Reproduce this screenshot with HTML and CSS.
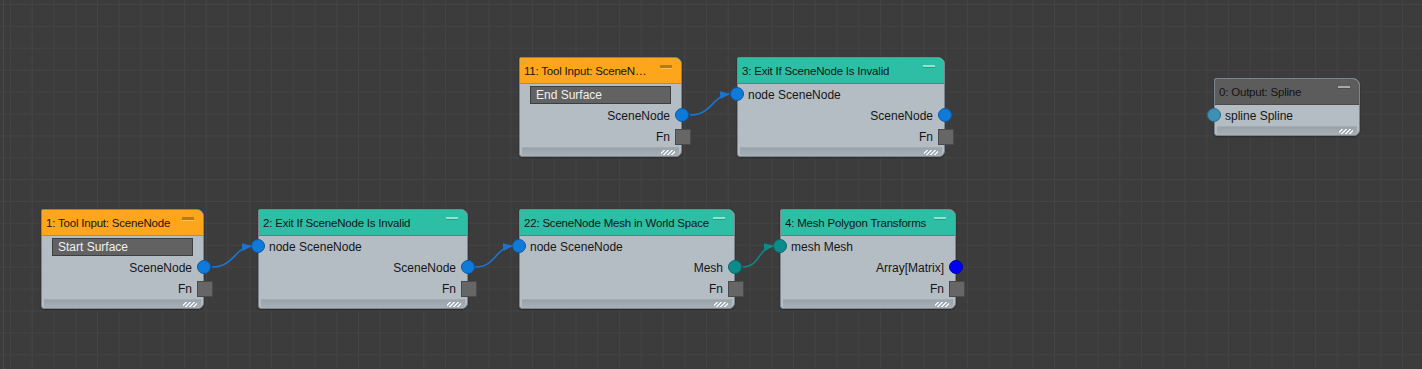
FILE: index.html
```html
<!DOCTYPE html>
<html>
<head>
<meta charset="utf-8">
<link rel="stylesheet" href="styles.css">
</head>
<body>
<div class="canvas">
  <svg class="wires" width="1422" height="369" viewBox="0 0 1422 369">
    <defs>
      <marker id="ab" markerWidth="10" markerHeight="8" refX="9" refY="4" orient="auto" markerUnits="userSpaceOnUse">
        <path d="M0,0 L10,4 L0,8 Z" fill="#1a74d0"/>
      </marker>
      <marker id="at" markerWidth="10" markerHeight="8" refX="9" refY="4" orient="auto" markerUnits="userSpaceOnUse">
        <path d="M0,0 L10,4 L0,8 Z" fill="#0e8a8a"/>
      </marker>
    </defs>
    <path class="wire blue" d="M690,115 C712,115 712,96 729,94" marker-end="url(#ab)"/>
    <path class="wire blue" d="M212,267 C234,267 234,248 251,246" marker-end="url(#ab)"/>
    <path class="wire blue" d="M475,267 C496,267 495,248 512,246" marker-end="url(#ab)"/>
    <path class="wire teal" d="M743,267 C760,267 758,248 773,246" marker-end="url(#at)"/>
  </svg>

  <div class="node orange" style="left:519px;top:57px;width:163px">
    <div class="head"><span class="title clip">11: Tool Input: SceneNode</span><span class="collapse"></span></div>
    <div class="row"><div class="field">End Surface</div></div>
    <div class="row out"><span>SceneNode</span><i class="port blue"></i></div>
    <div class="row out"><span>Fn</span><i class="sq"></i></div>
    <div class="foot"><i class="grip"></i></div>
  </div>

  <div class="node teal" style="left:737px;top:57px;width:208px">
    <div class="head"><span class="title">3: Exit If SceneNode Is Invalid</span><span class="collapse"></span></div>
    <div class="row in"><i class="port blue"></i><span>node SceneNode</span></div>
    <div class="row out"><span>SceneNode</span><i class="port blue"></i></div>
    <div class="row out"><span>Fn</span><i class="sq"></i></div>
    <div class="foot"><i class="grip"></i></div>
  </div>

  <div class="node grey" style="left:1214px;top:78px;width:146px">
    <div class="head"><span class="title">0: Output: Spline</span><span class="collapse"></span></div>
    <div class="row in"><i class="port steel"></i><span>spline Spline</span></div>
    <div class="foot"><i class="grip"></i></div>
  </div>

  <div class="node orange" style="left:41px;top:209px;width:163px">
    <div class="head"><span class="title">1: Tool Input: SceneNode</span><span class="collapse"></span></div>
    <div class="row"><div class="field">Start Surface</div></div>
    <div class="row out"><span>SceneNode</span><i class="port blue"></i></div>
    <div class="row out"><span>Fn</span><i class="sq"></i></div>
    <div class="foot"><i class="grip"></i></div>
  </div>

  <div class="node teal" style="left:258px;top:209px;width:210px">
    <div class="head"><span class="title">2: Exit If SceneNode Is Invalid</span><span class="collapse"></span></div>
    <div class="row in"><i class="port blue"></i><span>node SceneNode</span></div>
    <div class="row out"><span>SceneNode</span><i class="port blue"></i></div>
    <div class="row out"><span>Fn</span><i class="sq"></i></div>
    <div class="foot"><i class="grip"></i></div>
  </div>

  <div class="node teal" style="left:519px;top:209px;width:216px">
    <div class="head"><span class="title">22: SceneNode Mesh in World Space</span><span class="collapse"></span></div>
    <div class="row in"><i class="port blue"></i><span>node SceneNode</span></div>
    <div class="row out"><span>Mesh</span><i class="port tealp"></i></div>
    <div class="row out"><span>Fn</span><i class="sq"></i></div>
    <div class="foot"><i class="grip"></i></div>
  </div>

  <div class="node teal" style="left:780px;top:209px;width:176px">
    <div class="head"><span class="title">4: Mesh Polygon Transforms</span><span class="collapse"></span></div>
    <div class="row in"><i class="port tealp"></i><span>mesh Mesh</span></div>
    <div class="row out"><span>Array[Matrix]</span><i class="port pure"></i></div>
    <div class="row out"><span>Fn</span><i class="sq"></i></div>
    <div class="foot"><i class="grip"></i></div>
  </div>
</div>
</body>
</html>
```

FILE: styles.css
```css
html, body {
  margin: 0;
  padding: 0;
  width: 1422px;
  height: 369px;
  overflow: hidden;
  background: #3c3c3c;
}
.canvas {
  position: relative;
  width: 1422px;
  height: 369px;
  background-color: #3c3c3c;
  background-image:
    linear-gradient(to right, #444444 1px, transparent 1px),
    linear-gradient(to bottom, #444444 1px, transparent 1px);
  background-size: 21.75px 21.9px;
  background-position: 10px 4px;
  font-family: "Liberation Sans", Arial, sans-serif;
  font-size: 12px;
  color: #161616;
}
.canvas::before {
  content: "";
  position: absolute;
  left: 3px;
  top: 0;
  width: 1px;
  height: 369px;
  background: #4a4a4a;
}
.wires {
  position: absolute;
  left: 0;
  top: 0;
  z-index: 2;
  pointer-events: none;
}
.wire {
  fill: none;
  stroke-width: 1.6;
}
.wire.blue { stroke: #1a74d0; }
.wire.teal { stroke: #0e8a8a; }

.node {
  position: absolute;
  box-sizing: border-box;
  display: flex;
  flex-direction: column;
  background: #b4bcc4;
  border: 1px solid #7c848c;
  border-radius: 2px 7px 6px 3px;
  box-shadow: 0 1px 2px rgba(0,0,0,0.35);
  z-index: 1;
}
.head {
  height: 26px;
  box-sizing: border-box;
  display: flex;
  align-items: center;
  padding: 0 4px 0 4px;
  border-bottom: 1px solid rgba(0,0,0,0.18);
  border-radius: 1px 6px 0 0;
  position: relative;
  font-size: 11.5px;
  letter-spacing: -0.2px;
}
.orange .head { background: #fda51b; }
.teal .head { background: #2ebea5; }
.grey .head { background: #5c5c5c; color: #141414; }
.title {
  flex: 1;
  min-width: 0;
  white-space: nowrap;
  overflow: hidden;
  text-overflow: ellipsis;
  padding-right: 12px;
  padding-top: 1px;
}
.title.clip {
  padding-right: 25px;
}
.collapse {
  position: absolute;
  right: 9px;
  top: 7px;
  width: 12px;
  height: 3px;
}
.orange .collapse { background: #b97a14; border-bottom: 1px solid #f8c060; }
.teal .collapse { background: #8fe3d3; height: 2px; border-bottom: 1px solid #26a08a; }
.grey .collapse { background: #a8a8a8; height: 2px; border-bottom: 1px solid #4c4c4c; }

.row {
  height: 21px;
  display: flex;
  align-items: center;
  position: relative;
}
.row.out {
  justify-content: flex-end;
  padding-right: 11px;
}
.row.in {
  padding-left: 10px;
}
.field {
  box-sizing: border-box;
  margin: 0 10px;
  flex: 1;
  height: 18px;
  background: #626262;
  border: 1px solid #3e3e3e;
  color: #f0f0f0;
  padding-left: 5px;
  line-height: 16px;
}
.port {
  position: absolute;
  width: 14px;
  height: 14px;
  border-radius: 50%;
  box-sizing: border-box;
  top: 3px;
  z-index: 3;
}
.row.out .port { right: -8px; }
.row.in .port { left: -8px; }
.port.blue { background: #0f7ad9; border: 1px solid #0a5aa6; }
.port.tealp { background: #0c8b8c; border: 1px solid #096a6b; }
.port.pure { background: #0000f2; border: 1px solid #0000a0; }
.port.steel { background: #3d8fb4; border: 1px solid #2b6c8a; }
.sq {
  position: absolute;
  right: -10px;
  top: 3px;
  width: 16px;
  height: 16px;
  box-sizing: border-box;
  background: #666666;
  border: 1px solid #4a4a4a;
  z-index: 3;
}
.foot {
  height: 8px;
  margin: 0 2px 0 2px;
  border-top: 1px solid #a3abb3;
  background: linear-gradient(#9aa2aa, #a7afb7);
  border-radius: 0 0 4px 2px;
  position: relative;
}
.grip {
  position: absolute;
  right: 4px;
  bottom: 1px;
  width: 14px;
  height: 5px;
  background: repeating-linear-gradient(135deg, transparent 0 1.5px, #eef1f4 1.5px 3px);
}
```
